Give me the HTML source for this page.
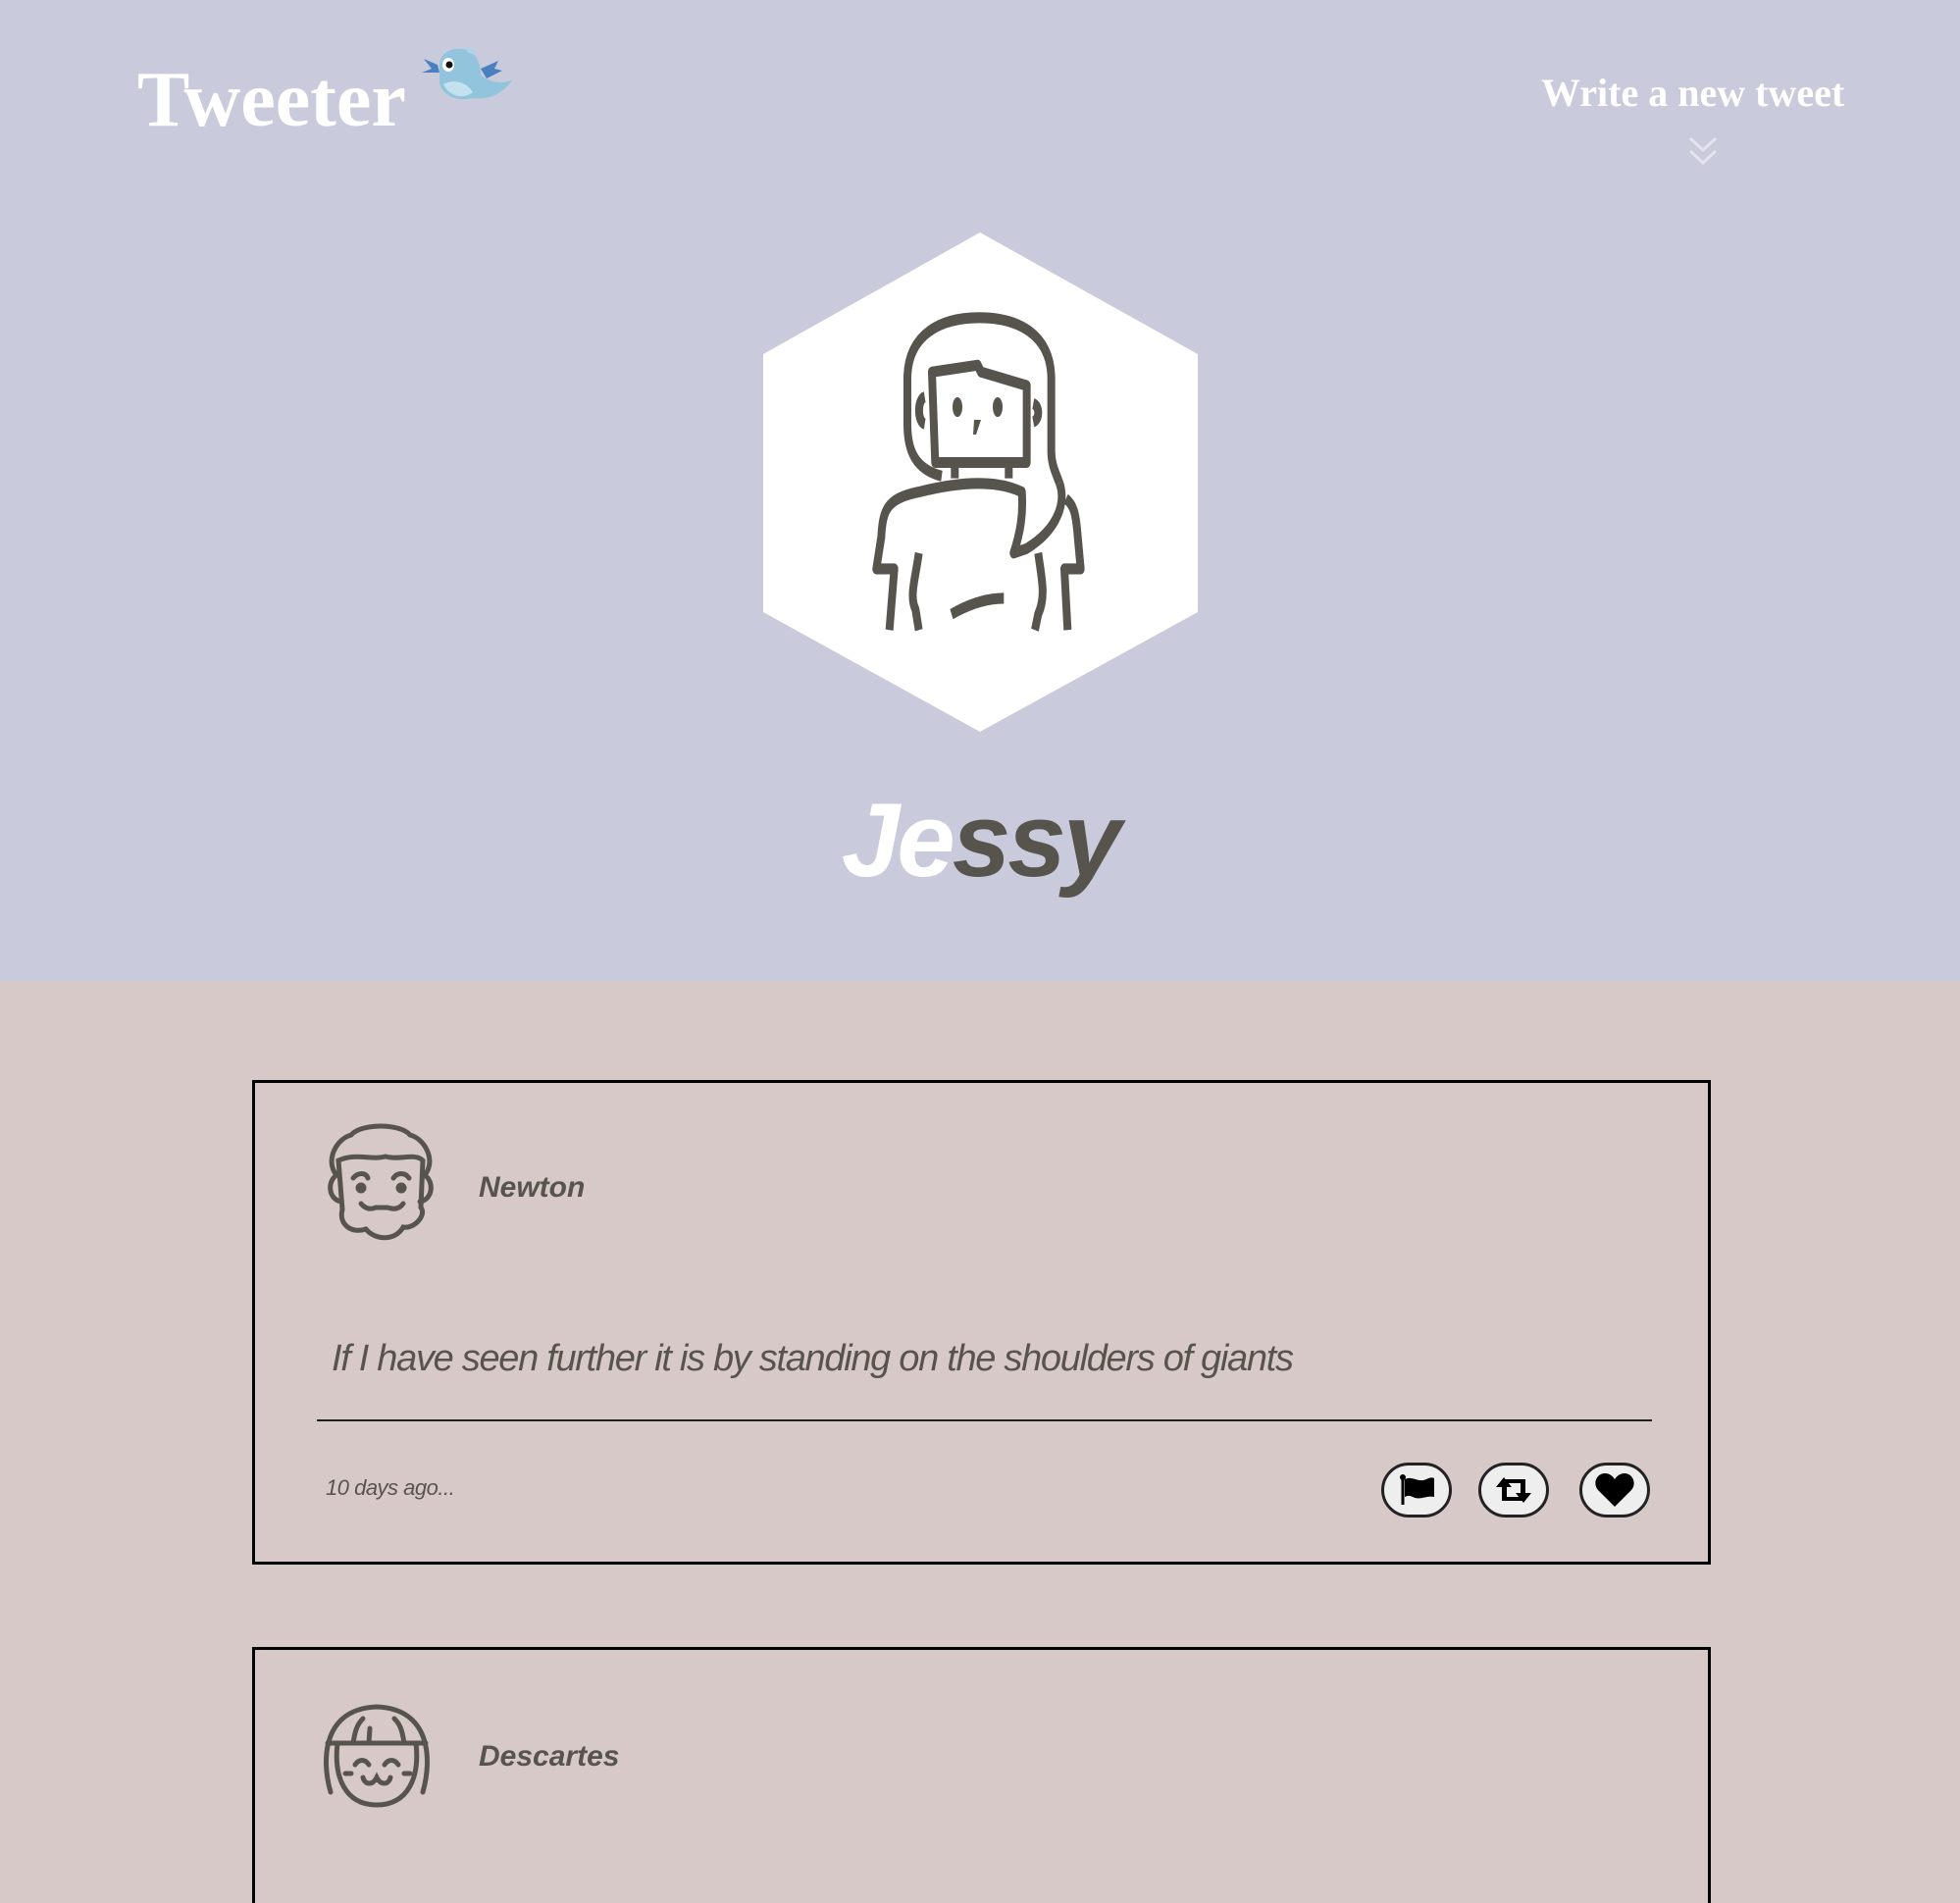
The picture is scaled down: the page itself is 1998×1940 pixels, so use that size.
<!DOCTYPE html>
<html style="overflow:hidden;height:1940px"><head><meta charset="utf-8"><style>
*{margin:0;padding:0;box-sizing:border-box}
body{width:1998px;height:1940px;overflow:hidden;background:#d8c9c9;font-family:"Liberation Sans",sans-serif;position:relative}
.hdr{position:absolute;left:0;top:0;width:1998px;height:1000px;background:#c9cadb}
.abs{position:absolute}
.logo{left:140px;top:52px;font:bold 80px "Liberation Serif",serif;color:#fff;line-height:100px}
.write{left:1571px;top:72px;font:bold 40px "Liberation Serif",serif;color:#fff;line-height:46px;white-space:nowrap}
.name{left:0;width:1998px;text-align:center;top:796px;font:bold italic 107px "Liberation Sans",sans-serif;line-height:120px;letter-spacing:-3px;color:#57544e}
.card{position:absolute;left:257px;width:1487px;border:3px solid #000}
.uname{position:absolute;left:228px;font:bold italic 30px "Liberation Sans",sans-serif;color:#57544e}
.quote{position:absolute;left:78px;top:260px;font:italic 38px "Liberation Sans",sans-serif;color:#57544e;white-space:nowrap;letter-spacing:-1.3px}
.line{position:absolute;left:63px;top:343px;width:1361px;height:2px;background:#222}
.ago{position:absolute;left:72px;top:400px;font:italic 22px "Liberation Sans",sans-serif;color:#57544e;letter-spacing:-0.5px}
.btn{position:absolute;top:387px;width:72px;height:56px;border:3px solid #222;border-radius:28px;background:#eee;display:flex;align-items:center;justify-content:center}
</style></head><body>
<div class="hdr"></div>
<div class="abs logo">Tweeter</div>
<svg class="abs" style="left:420px;top:44px" width="110" height="80" viewBox="0 0 110 80">
<path d="M28 20 C30 8 45 2 58 8 C66 12 70 22 70 32 C78 40 90 42 102 38 C92 52 78 58 62 56 C44 60 30 52 28 40 Z" fill="#92c4dd"/>
<path d="M32 42 C42 36 56 40 62 50 C52 58 38 54 32 42Z" fill="#c4e2ee"/>
<path d="M52 4 C58 2 64 6 66 12 L58 10Z" fill="#b0d4e6"/>
<path d="M70 26 L88 18 L84 26 L92 28 L76 36Z" fill="#4a80bf"/>
<path d="M26 22 L12 16 L20 26 L10 30 L28 30Z" fill="#4a80bf"/>
<ellipse cx="37" cy="22" rx="6" ry="7" fill="#fff"/><circle cx="38" cy="22" r="3.5" fill="#111"/>
</svg>
<div class="abs write">Write a new tweet</div>
<svg class="abs" style="left:1719px;top:137px" width="34" height="34" viewBox="0 0 34 34"><path d="M4 4 L17 16 L30 4 M4 17 L17 29 L30 17" fill="none" stroke="#e4e4ee" stroke-width="3"/></svg>
<svg class="abs" style="left:0;top:0" width="1998" height="1000">
<polygon points="999,237 1221,361 1221,624 999,746 778,624 778,361" fill="#fff"/>
<g transform="translate(760,220) scale(0.3333,0.4615)" fill="none" stroke="#57544e" stroke-width="24" stroke-linejoin="round">
<path d="M600 575 C520 560 495 520 495 460 L495 360 C495 260 600 225 715 225 C830 225 935 260 935 360 L935 520 C935 550 950 570 960 590"/>
<path d="M570 345 L710 330 L720 345 L860 375 L860 545 L580 545 Z"/>
<path d="M548 400 C525 405 525 455 548 460 M880 415 C900 420 900 450 880 455"/>
<path d="M640 545 L640 580 M805 545 L805 580"/>
<path d="M960 590 C980 630 960 690 860 735 L820 745 C840 700 850 660 845 610 C760 580 640 590 530 610 C430 625 420 650 415 710 L400 780 L455 780 L440 915"/>
<path d="M980 625 C1005 640 1010 660 1015 700 L1025 780 L975 780 L985 915"/>
<path d="M530 745 C520 800 500 840 520 870 L530 915 M895 745 C905 800 920 840 895 880 L885 915"/>
<path d="M630 880 C690 855 740 845 790 845"/>
</g>
<g fill="#57544e"><ellipse cx="976" cy="415" rx="5" ry="10"/><ellipse cx="1017" cy="415" rx="5" ry="10"/><path d="M993 428 L1000 428 L995 443 L992 443Z"/></g>
</svg>
<div class="abs name"><span style="color:#fff">Je</span>ssy</div>

<div class="card" style="top:1101px;height:494px">
<svg style="position:absolute;left:63px;top:39px" width="130" height="130" viewBox="0 0 130 130" fill="none" stroke="#57544e" stroke-width="5" stroke-linecap="round">
<path d="M20 55 C8 40 20 18 35 14 C45 2 85 2 95 14 C110 18 122 40 110 55 C120 62 118 80 105 82"/>
<path d="M25 82 C12 80 10 62 20 55"/>
<path d="M22 40 C40 32 55 40 70 36 C85 40 100 32 108 40 L106 88 C112 95 100 110 88 108 C80 122 60 122 50 110 C35 115 22 105 26 90 Z"/>
<path d="M37 58 C42 52 50 52 52 58 M78 58 C82 52 90 52 94 58"/>
<circle cx="45" cy="68" r="3" fill="#57544e"/><circle cx="86" cy="68" r="3" fill="#57544e"/>
<path d="M45 84 C50 90 55 90 60 88 L72 88 C78 90 84 90 88 84"/>
</svg>
<div class="uname" style="top:90px">Newton</div>
<div class="quote">If I have seen further it is by standing on the shoulders of giants</div>
<div class="line"></div>
<div class="ago">10 days ago...</div>
<div class="btn" style="left:1148px"><svg width="40" height="34" viewBox="0 0 40 34"><path d="M6 4 L6 32" stroke="#000" stroke-width="3"/><circle cx="6" cy="4" r="3"/><path d="M8 6 C16 2 22 10 30 6 C34 4 36 4 38 5 L38 24 C30 22 24 28 16 24 C12 22 10 23 8 24Z"/></svg></div>
<div class="btn" style="left:1247px"><svg width="44" height="34" viewBox="0 0 44 34"><path d="M4 14 L12 4 L20 14 L15 14 L15 24 L30 24 L34 28 L10 28 L10 14Z M40 20 L32 30 L24 20 L29 20 L29 10 L14 10 L10 6 L34 6 L34 20Z"/></svg></div>
<div class="btn" style="left:1350px"><svg width="42" height="38" viewBox="0 0 42 38"><path d="M21 36 L4 19 C-2 12 3 2 11 2 C16 2 19 5 21 8 C23 5 26 2 31 2 C39 2 44 12 38 19Z"/></svg></div>
</div>

<div class="card" style="top:1679px;height:280px">
<svg style="position:absolute;left:62px;top:40px" width="124" height="124" viewBox="0 0 124 124" fill="none" stroke="#57544e" stroke-width="5" stroke-linecap="round">
<path d="M15 105 C5 70 8 20 62 18 C116 20 119 70 109 105"/>
<path d="M12 55 L112 55"/>
<path d="M22 55 C18 90 30 118 62 118 C94 118 106 90 102 55"/>
<path d="M38 55 C40 42 42 36 48 30 M54 55 L55 40 M90 55 C88 42 86 36 80 30"/>
<path d="M40 77 C44 71 50 71 54 77 M70 77 C74 71 80 71 84 77"/>
<path d="M30 86 L36 86 M90 86 L96 86"/>
<path d="M48 90 C50 98 58 98 62 90 C66 98 74 98 76 90"/>
</svg>
<div class="uname" style="top:92px">Descartes</div>
</div>
</body></html>
